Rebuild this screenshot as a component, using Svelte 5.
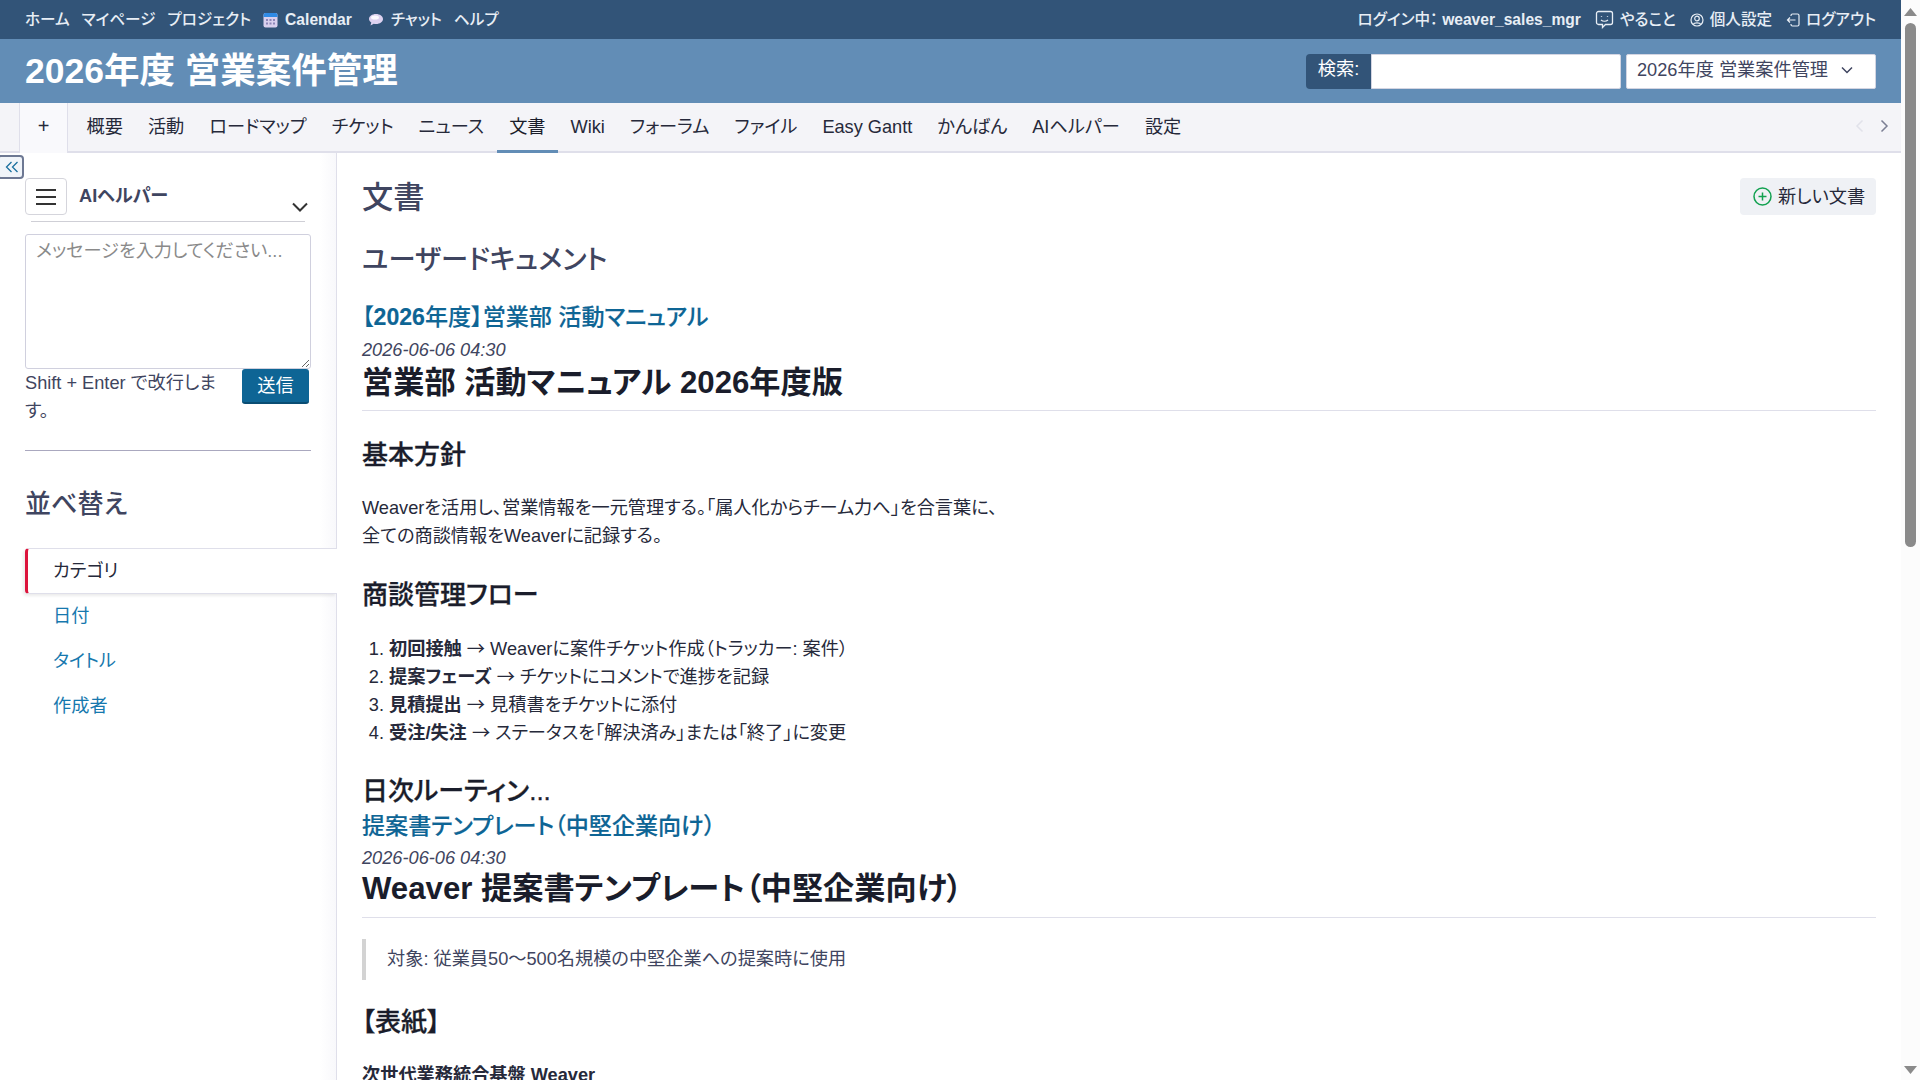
<script>
	const top_left = ["マイページ", "プロジェクト"];
	const tabs = ["概要", "活動", "ロードマップ", "チケット", "ニュース", "文書", "Wiki", "フォーラム", "ファイル", "Easy Gantt", "かんばん", "AIヘルパー", "設定"];
	const sort_links = ["日付", "タイトル", "作成者"];
</script>

<div class="page">
	<div class="view">
		<header class="top">
			<nav class="top-left">
				<a href="#home">ホーム</a>
				{#each top_left as item}
					<a href="#x">{item}</a>
				{/each}
				<a href="#cal" class="with-icon bold">
					<svg width="15" height="16" viewBox="0 0 15 16">
						<rect x="0.5" y="1" width="14" height="14.5" rx="2" fill="#d9d0ee" />
						<path d="M0.5 5V3a2 2 0 0 1 2-2h10a2 2 0 0 1 2 2v2z" fill="#2f8be6" />
						<g fill="#8d86b8">
							<rect x="3" y="7" width="2" height="2" /><rect x="6.5" y="7" width="2" height="2" /><rect x="10" y="7" width="2" height="2" />
							<rect x="3" y="10.5" width="2" height="2" /><rect x="6.5" y="10.5" width="2" height="2" /><rect x="10" y="10.5" width="2" height="2" />
						</g>
					</svg>
					Calendar
				</a>
				<a href="#chat" class="with-icon chat">
					<svg width="16" height="14" viewBox="0 0 16 14">
						<path d="M8 1c4 0 7 2.2 7 5s-3 5-7 5c-.8 0-1.5-.1-2.2-.3L2.5 12.500l.8-3C2 8.500 1 7.400 1 6c0-2.800 3-5 7-5z" fill="#ddd2f0" />
						<ellipse cx="7" cy="4.500" rx="4" ry="2" fill="#fbf9ff" />
					</svg>
					チャット
				</a>
				<a href="#help">ヘルプ</a>
			</nav>
			<nav class="top-right">
				<span class="login">ログイン中： <b>weaver_sales_mgr</b></span>
				<a href="#todo" class="with-icon">
					<svg width="19" height="19" viewBox="0 0 19 19" fill="none" stroke="#e8eef5" stroke-width="1.300">
						<path d="M3.500 1.500h12a2 2 0 0 1 2 2v9a2 2 0 0 1-2 2h-5l-3 3v-3h-4a2 2 0 0 1-2-2v-9a2 2 0 0 1 2-2z" />
						<path d="M6 10c1.800 1.500 5 1.500 7 0" />
						<path d="M6.500 6v.8M12.500 6v.8" />
					</svg>
					やること
				</a>
				<a href="#me" class="with-icon">
					<svg width="14" height="14" viewBox="0 0 14 14" fill="none" stroke="#e8eef5" stroke-width="1.200">
						<circle cx="7" cy="7" r="6" />
						<circle cx="7" cy="5.500" r="2.300" />
						<path d="M3.200 11.300c1-1.800 6.600-1.800 7.600 0" />
					</svg>
					個人設定
				</a>
				<a href="#out" class="with-icon">
					<svg width="14" height="14" viewBox="0 0 14 14" fill="none" stroke="#e8eef5" stroke-width="1.200">
						<path d="M5 3V2.500a1.500 1.500 0 0 1 1.500-1.500h5A1.500 1.500 0 0 1 13 2.500v9a1.500 1.500 0 0 1-1.500 1.500h-5A1.500 1.500 0 0 1 5 11.500V11" />
						<path d="M9.500 7H1.500M4 4.500 1.500 7 4 9.500" />
					</svg>
					ログアウト
				</a>
			</nav>
		</header>

		<div class="head">
			<h1 class="project">2026年度 営業案件管理</h1>
			<div class="search">
				<label class="search-label" for="q">検索:</label>
				<input id="q" class="search-input" type="text" />
				<div class="jump">
					<span>2026年度 営業案件管理</span>
					<svg width="12" height="8" viewBox="0 0 12 8" fill="none" stroke="#3f4560" stroke-width="1.500"><path d="M1 1.500 6 6.500 11 1.500" /></svg>
				</div>
			</div>
		</div>

		<div class="tabs">
			<div class="tab-spacer"></div>
			<a class="tab-new" href="#new">+</a>
			<div class="tab-list">
				{#each tabs as tab}
					<a href="#t" class="tab" class:selected={tab === "文書"}>{tab}</a>
				{/each}
			</div>
			<div class="tab-arrows">
				<svg width="9" height="14" viewBox="0 0 9 14" fill="none" stroke="#e1e2ea" stroke-width="1.500"><path d="M7.500 1.500 2 7l5.500 5.500" /></svg>
				<svg width="9" height="14" viewBox="0 0 9 14" fill="none" stroke="#7b7f94" stroke-width="1.500"><path d="M1.500 1.500 7 7l-5.500 5.500" /></svg>
			</div>
		</div>

		<div class="body">
			<button class="collapse" aria-label="collapse">
				<svg width="14" height="12" viewBox="0 0 14 12" fill="none" stroke="#1a6f9f" stroke-width="1.300"><path d="M6.500 1 1.500 6l5 5M12.500 1l-5 5 5 5" /></svg>
			</button>

			<aside class="side">
				<div class="ai-head">
					<button class="burger" aria-label="menu">
						<span></span><span></span><span></span>
					</button>
					<span class="ai-title">AIヘルパー</span>
					<svg class="ai-chevron" width="16" height="10" viewBox="0 0 16 10" fill="none" stroke="#333" stroke-width="2"><path d="M1 1.500 8 8.500 15 1.500" /></svg>
				</div>
				<div class="ai-rule"></div>
				<textarea class="ai-input" placeholder="メッセージを入力してください..."></textarea>
				<div class="ai-foot">
					<p class="hint">Shift + Enter で改行します。</p>
					<button class="send">送信</button>
				</div>
				<hr class="side-rule" />
				<h3 class="side-title">並べ替え</h3>
				<ul class="sort">
					<li class="sort-item active">カテゴリ</li>
					{#each sort_links as link}
						<li class="sort-item"><a href="#s">{link}</a></li>
					{/each}
				</ul>
			</aside>

			<main class="main">
				<div class="title-row">
					<h2 class="page-title">文書</h2>
					<a class="btn-new" href="#add">
						<svg width="19" height="19" viewBox="0 0 19 19" fill="none" stroke="#12a150" stroke-width="1.500">
							<circle cx="9.500" cy="9.500" r="8.500" />
							<path d="M9.500 5.500v8M5.500 9.500h8" />
						</svg>
						新しい文書
					</a>
				</div>

				<h3 class="category">ユーザードキュメント</h3>

				<article class="doc first">
					<h4 class="doc-link"><a href="#d1">【<b>2026</b>年度】営業部 活動マニュアル</a></h4>
					<p class="doc-date">2026-06-06 04:30</p>
					<h1 class="doc-h1">営業部 活動マニュアル 2026年度版</h1>
					<h2 class="doc-h2 basic">基本方針</h2>
					<p class="doc-p">Weaverを活用し、営業情報を一元管理する。「属人化からチーム力へ」を合言葉に、<br />全ての商談情報をWeaverに記録する。</p>
					<h2 class="doc-h2 flow">商談管理フロー</h2>
					<ol class="doc-list">
						<li><b>初回接触</b> <span class="arrow">→</span> Weaverに案件チケット作成（トラッカー: 案件）</li>
						<li><b>提案フェーズ</b> <span class="arrow">→</span> チケットにコメントで進捗を記録</li>
						<li><b>見積提出</b> <span class="arrow">→</span> 見積書をチケットに添付</li>
						<li><b>受注/失注</b> <span class="arrow">→</span> ステータスを「解決済み」または「終了」に変更</li>
					</ol>
					<h2 class="doc-h2 daily">日次ルーティン...</h2>
				</article>

				<article class="doc">
					<h4 class="doc-link"><a href="#d2">提案書テンプレート（中堅企業向け）</a></h4>
					<p class="doc-date">2026-06-06 04:30</p>
					<h1 class="doc-h1 tight">Weaver 提案書テンプレート（中堅企業向け）</h1>
					<blockquote class="doc-quote">対象: 従業員50～500名規模の中堅企業への提案時に使用</blockquote>
					<h2 class="doc-h2 cover">【表紙】</h2>
					<p class="doc-p strong"><b>次世代業務統合基盤 Weaver</b></p>
				</article>
			</main>
		</div>
	</div>

	<div class="scrollbar">
		<svg class="sb-up" width="13" height="8" viewBox="0 0 13 8"><path d="M6.500 0 13 8H0z" fill="#8a8a8a" /></svg>
		<div class="sb-thumb"></div>
		<svg class="sb-down" width="13" height="8" viewBox="0 0 13 8"><path d="M6.500 8 13 0H0z" fill="#8a8a8a" /></svg>
	</div>
</div>

<style>
	:global(body) {
		margin: 0;
		overflow: hidden;
		background: #fff;
	}

	.page {
		display: flex;
		height: 100vh;
		overflow: hidden;
		font-family: "Liberation Sans", "Noto Sans CJK JP", sans-serif;
		font-size: 18.2px;
		line-height: 28px;
		color: #3f4560;
		font-feature-settings: "palt";
	}

	a {
		text-decoration: none;
		color: inherit;
	}

	.view {
		flex: 1;
		min-width: 0;
		display: flex;
		flex-direction: column;
	}

	/* top bar */
	.top {
		height: 39px;
		flex: none;
		background: #325478;
		color: #e8eef5;
		display: flex;
		align-items: center;
		justify-content: space-between;
		padding: 0 25px;
		font-size: 15.6px;
		font-weight: 500;
	}

	.top-left,
	.top-right {
		display: flex;
		align-items: center;
		gap: 12px;
	}

	.top-right {
		gap: 14px;
	}

	.with-icon {
		display: flex;
		align-items: center;
		gap: 6px;
	}

	.top-left .with-icon {
		gap: 7px;
	}

	.top-left .chat {
		margin-left: 4px;
	}

	.bold,
	.login b {
		font-weight: 700;
	}

	/* project header */
	.head {
		height: 64px;
		flex: none;
		background: #628db6;
		display: flex;
		align-items: center;
		justify-content: space-between;
		padding: 0 25px;
	}

	.project {
		margin: 0;
		color: #fff;
		font-size: 35.5px;
		line-height: 44px;
		font-weight: 700;
	}

	.search {
		display: flex;
		align-items: center;
		height: 35px;
	}

	.search-label {
		width: 65px;
		height: 35px;
		box-sizing: border-box;
		background: #325478;
		color: #fff;
		border-radius: 4px 0 0 4px;
		text-align: center;
		line-height: 31px;
	}

	.search-input {
		width: 250px;
		height: 35px;
		box-sizing: border-box;
		border: 1px solid #d3d5e2;
		border-radius: 0 2px 2px 0;
		background: #fff;
		padding: 0;
		margin-right: 5px;
	}

	.jump {
		width: 250px;
		height: 35px;
		box-sizing: border-box;
		border: 1px solid #d3d5e2;
		border-radius: 2px;
		background: #fff;
		display: flex;
		align-items: center;
		gap: 13px;
		padding: 0 0 2px 10px;
		line-height: 31px;
	}

	/* tabs */
	.tabs {
		height: 50px;
		flex: none;
		box-sizing: border-box;
		background: #f4f4f8;
		border-bottom: 2px solid #dfdfea;
		display: flex;
		color: #26293a;
	}

	.tab-spacer {
		width: 19px;
		flex: none;
	}

	.tab-new {
		width: 49px;
		flex: none;
		background: #f9f9fc;
		border-left: 1px solid #dfdfea;
		border-right: 1px solid #dfdfea;
		box-sizing: border-box;
		text-align: center;
		line-height: 47px;
		font-size: 20px;
		margin-bottom: -2px;
	}

	.tab-list {
		display: flex;
		flex: 1;
		padding-left: 6px;
	}

	.tab {
		padding: 0 12.5px;
		line-height: 48px;
		height: 48px;
		box-sizing: border-box;
		white-space: nowrap;
	}

	.tab.selected {
		height: 50px;
		border-bottom: 3px solid #628db6;
		color: #1a1d2b;
	}

	.tab-arrows {
		display: flex;
		align-items: center;
		gap: 16px;
		padding-right: 12px;
		padding-bottom: 2px;
	}

	/* body */
	.body {
		flex: 1;
		min-height: 0;
		display: flex;
		position: relative;
		background: #fff;
	}

	.collapse {
		position: absolute;
		left: -3px;
		top: 2px;
		width: 27px;
		height: 24px;
		padding: 0 0 0 2px;
		box-sizing: border-box;
		background: #f0f4f9;
		border: 2px solid #6d7893;
		border-radius: 4px;
		display: flex;
		align-items: center;
		justify-content: center;
	}

	/* sidebar */
	.side {
		width: 311px;
		flex: none;
		box-sizing: content-box;
		border-right: 1px solid #dfdfea;
		padding-left: 25px;
		background: linear-gradient(to left, #f8f8fb, #fff 16px);
	}

	.ai-head {
		display: flex;
		width: 286px;
		height: 37px;
		margin-top: 25px;
		position: relative;
	}

	.burger {
		width: 42px;
		height: 37px;
		box-sizing: border-box;
		padding: 0;
		background: #fff;
		border: 1px solid #d5d5dc;
		border-radius: 4px;
		display: flex;
		flex-direction: column;
		justify-content: center;
		align-items: center;
		gap: 5px;
	}

	.burger span {
		display: block;
		width: 20px;
		height: 2px;
		background: #333;
	}

	.ai-title {
		margin-left: 12px;
		font-size: 18.2px;
		font-weight: 700;
		line-height: 36px;
	}

	.ai-chevron {
		position: absolute;
		left: 267px;
		top: 24px;
	}

	.ai-rule {
		width: 274px;
		height: 1px;
		background: #cfcfd6;
		margin: 6px 0 0 6px;
	}

	.ai-input {
		display: block;
		width: 286px;
		height: 135px;
		box-sizing: border-box;
		margin: 12px 0 0;
		padding: 2px 10px 0;
		border: 1px solid #d0d0de;
		border-radius: 3px;
		font: inherit;
		font-size: 18.2px;
		line-height: 28px;
		color: #3f4560;
		outline: none;
	}

	.ai-input::placeholder {
		color: #8a8a8a;
	}

	.ai-foot {
		display: flex;
		width: 286px;
		align-items: flex-start;
	}

	.hint {
		width: 200px;
		margin: 0;
		flex: none;
		line-height: 28px;
	}

	.send {
		width: 67px;
		height: 35px;
		margin-left: 17px;
		padding: 0;
		background: #0e6595;
		color: #fff;
		border: none;
		border-bottom: 2px solid #0a4d73;
		border-radius: 3px;
		font: inherit;
		font-size: 18.2px;
		line-height: 30px;
	}

	.side-rule {
		width: 286px;
		height: 1px;
		margin: 25px 0 0;
		border: none;
		background: #aaa8bf;
	}

	.side-title {
		margin: 34px 0 0;
		font-size: 26px;
		line-height: 38px;
		font-weight: 500;
	}

	.sort {
		list-style: none;
		margin: 25px 0 0;
		padding: 0;
	}

	.sort-item {
		height: 45px;
		box-sizing: border-box;
		padding-left: 28px;
		line-height: 45px;
		color: #1678ae;
	}

	.sort-item.active {
		height: 46px;
		margin-right: -1px;
		color: #26293a;
		background: #fff;
		border: 1px solid #dfdfea;
		border-left: 3px solid #dc143c;
		border-right: none;
		border-radius: 4px 0 0 4px;
		padding-left: 25px;
		line-height: 44px;
		box-shadow: -2px 2px 3px rgba(0, 0, 0, 0.08);
		position: relative;
	}

	/* content */
	.main {
		flex: 1;
		min-width: 0;
		padding: 0 25px;
		overflow: hidden;
		color: #1a1d2b;
	}

	.title-row {
		display: flex;
		justify-content: space-between;
		margin-top: 25px;
		height: 37px;
	}

	.page-title {
		margin: 0;
		font-size: 31.2px;
		line-height: 40px;
		font-weight: 500;
		color: #3f4560;
	}

	.btn-new {
		display: flex;
		align-items: center;
		gap: 6px;
		width: 136px;
		height: 37px;
		box-sizing: border-box;
		padding-left: 13px;
		background: #eff1f5;
		border-radius: 4px;
		color: #26293a;
	}

	.category {
		margin: 25.5px 0 0;
		font-size: 27.3px;
		line-height: 38px;
		font-weight: 500;
		color: #3f4560;
	}

	.doc.first {
		margin-top: 20px;
	}

	.first .doc-link {
		margin-bottom: 1px;
	}

	.doc-link {
		margin: 0;
		font-size: 23.1px;
		line-height: 36px;
		font-weight: 500;
		-webkit-text-stroke: 0.15px currentColor;
	}

	.doc-link a {
		color: #0e6595;
	}

	.doc-date {
		margin: 0;
		font-style: italic;
		color: #3f4560;
		line-height: 28px;
	}

	.doc-h1 {
		margin: 0;
		font-size: 31.2px;
		line-height: 38px;
		font-weight: 700;
		padding-bottom: 8px;
		border-bottom: 1px solid #dfdfea;
	}

	.doc-h1.tight {
		margin-top: -2px;
		padding-bottom: 9px;
	}

	.doc-h2 {
		margin: 0;
		font-size: 26px;
		line-height: 38px;
		font-weight: 500;
		-webkit-text-stroke: 0.3px currentColor;
	}

	.basic {
		margin-top: 25px;
	}

	.doc-p {
		margin: 20px 0 0;
		color: #26293a;
	}

	.flow {
		margin-top: 26px;
	}

	.doc-list {
		margin: 21px 0 0;
		padding-left: 27px;
		color: #26293a;
	}

	.doc-list li {
		height: 28px;
	}

	.arrow {
		font-family: "Noto Sans CJK JP", sans-serif;
		font-feature-settings: normal;
		line-height: 0;
	}

	.daily {
		margin-top: 25px;
		margin-bottom: -2px;
	}

	.doc-quote {
		margin: 21px 0 0;
		padding: 6px 0 6px 21px;
		height: 41px;
		box-sizing: border-box;
		line-height: 28px;
		border-left: 4px solid #d3d3d3;
		color: #3f4560;
	}

	.cover {
		margin-top: 23px;
	}

	.doc-p.strong {
		margin-top: 20px;
	}

	/* scrollbar */
	.scrollbar {
		width: 19px;
		flex: none;
		background: #fcfcfc;
		position: relative;
	}

	.sb-up {
		position: absolute;
		left: 3px;
		top: 8px;
	}

	.sb-down {
		position: absolute;
		left: 3px;
		bottom: 6px;
	}

	.sb-thumb {
		position: absolute;
		left: 4px;
		top: 23px;
		width: 11px;
		height: 524px;
		background: #8a8a8a;
		border-radius: 6px;
	}
</style>
